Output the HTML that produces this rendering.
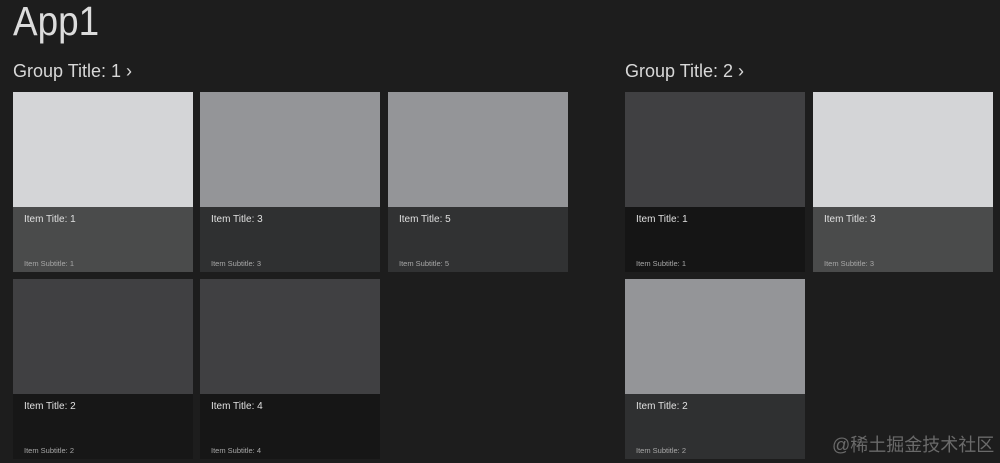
<!DOCTYPE html>
<html><head><meta charset="utf-8"><style>
*{margin:0;padding:0;box-sizing:border-box}
body{width:1000px;height:463px;background:#1d1d1d;font-family:"Liberation Sans",sans-serif;color:#e6e6e6;position:relative;overflow:hidden}
.app{position:absolute;left:13px;top:-2px;font-size:41px;color:#dcdcdc;transform:scaleX(0.9);transform-origin:0 0}
.g{position:absolute;top:61px;font-size:18px;color:#d8d8d8}
.t{position:absolute;width:180px;height:180px}
.im{height:115px}
.tx{height:65px;position:relative}
.tt{position:absolute;left:11px;top:7px;font-size:10px;color:#e0e0e0}
.st{position:absolute;left:11px;top:52px;font-size:7.5px;color:#a8a8a8}
.wm{position:absolute;left:832px;top:431px;font-size:18px;color:#6a6a6a;font-family:"Liberation Sans","Noto Sans CJK SC",sans-serif}
</style></head><body>
<div class="app">App1</div>
<div class="g" style="left:13px">Group Title: 1 ›</div>
<div class="g" style="left:625px">Group Title: 2 ›</div>

<div class="t" style="left:13px;top:92px"><div class="im" style="background:#d4d5d7"></div><div class="tx" style="background:#4a4b4b"><div class="tt">Item Title: 1</div><div class="st">Item Subtitle: 1</div></div></div>
<div class="t" style="left:200px;top:92px"><div class="im" style="background:#949598"></div><div class="tx" style="background:#2f3031"><div class="tt">Item Title: 3</div><div class="st">Item Subtitle: 3</div></div></div>
<div class="t" style="left:388px;top:92px"><div class="im" style="background:#949598"></div><div class="tx" style="background:#313233"><div class="tt">Item Title: 5</div><div class="st">Item Subtitle: 5</div></div></div>
<div class="t" style="left:13px;top:279px"><div class="im" style="background:#404042"></div><div class="tx" style="background:#171717"><div class="tt">Item Title: 2</div><div class="st">Item Subtitle: 2</div></div></div>
<div class="t" style="left:200px;top:279px"><div class="im" style="background:#404042"></div><div class="tx" style="background:#161616"><div class="tt">Item Title: 4</div><div class="st">Item Subtitle: 4</div></div></div>

<div class="t" style="left:625px;top:92px"><div class="im" style="background:#404042"></div><div class="tx" style="background:#151515"><div class="tt">Item Title: 1</div><div class="st">Item Subtitle: 1</div></div></div>
<div class="t" style="left:813px;top:92px"><div class="im" style="background:#d4d5d7"></div><div class="tx" style="background:#4a4b4b"><div class="tt">Item Title: 3</div><div class="st">Item Subtitle: 3</div></div></div>
<div class="t" style="left:625px;top:279px"><div class="im" style="background:#949598"></div><div class="tx" style="background:#2f3031"><div class="tt">Item Title: 2</div><div class="st">Item Subtitle: 2</div></div></div>
<div class="wm">@稀土掘金技术社区</div>
</body></html>
